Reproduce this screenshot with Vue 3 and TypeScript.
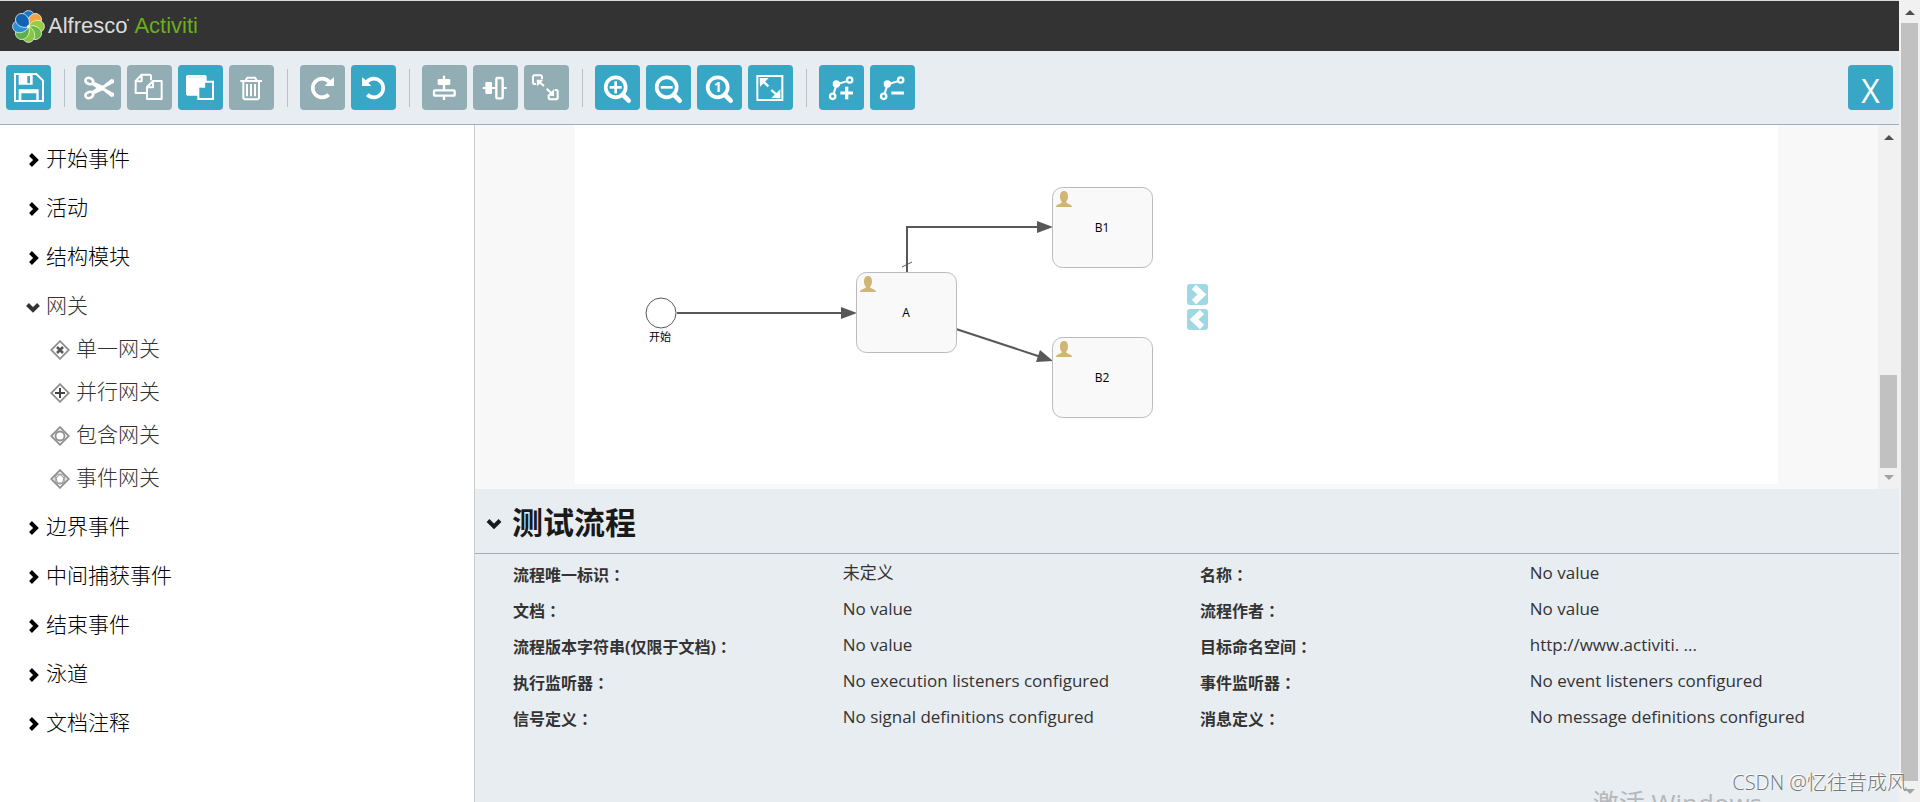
<script setup lang="ts">
import { ref } from 'vue'

type IconName =
  | 'save' | 'cut' | 'copy' | 'paste' | 'delete' | 'redo' | 'undo'
  | 'alignV' | 'alignH' | 'sameSize' | 'zoomIn' | 'zoomOut' | 'zoomActual'
  | 'zoomFit' | 'bendAdd' | 'bendRemove'

interface Tool { icon: IconName; label: string; off?: boolean }
interface Group { title: string; items: { icon: string; label: string }[] }

const toolGroups: Tool[][] = [
  [{ icon: 'save', label: '保存' }],
  [
    { icon: 'cut', label: '剪切', off: true },
    { icon: 'copy', label: '复制', off: true },
    { icon: 'paste', label: '粘贴' },
    { icon: 'delete', label: '删除', off: true },
  ],
  [
    { icon: 'redo', label: '重做', off: true },
    { icon: 'undo', label: '撤销' },
  ],
  [
    { icon: 'alignV', label: '垂直对齐', off: true },
    { icon: 'alignH', label: '水平对齐', off: true },
    { icon: 'sameSize', label: '相同大小', off: true },
  ],
  [
    { icon: 'zoomIn', label: '放大' },
    { icon: 'zoomOut', label: '缩小' },
    { icon: 'zoomActual', label: '实际大小' },
    { icon: 'zoomFit', label: '适应窗口' },
  ],
  [
    { icon: 'bendAdd', label: '添加拐点' },
    { icon: 'bendRemove', label: '删除拐点' },
  ],
]

const groups: Group[] = [
  { title: '开始事件', items: [] },
  { title: '活动', items: [] },
  { title: '结构模块', items: [] },
  {
    title: '网关',
    items: [
      { icon: 'exclusive', label: '单一网关' },
      { icon: 'parallel', label: '并行网关' },
      { icon: 'inclusive', label: '包含网关' },
      { icon: 'event', label: '事件网关' },
    ],
  },
  { title: '边界事件', items: [] },
  { title: '中间捕获事件', items: [] },
  { title: '结束事件', items: [] },
  { title: '泳道', items: [] },
  { title: '文档注释', items: [] },
]

const openGroup = ref('网关')
const toggle = (title: string) => {
  openGroup.value = openGroup.value === title ? '' : title
}

const tasks = [
  { name: 'A', x: 281, y: 147 },
  { name: 'B1', x: 477, y: 62 },
  { name: 'B2', x: 477, y: 212 },
]

const properties = [
  { name: '流程唯一标识', value: '未定义' },
  { name: '名称', value: 'No value' },
  { name: '文档', value: 'No value' },
  { name: '流程作者', value: 'No value' },
  { name: '流程版本字符串(仅限于文档)', value: 'No value' },
  { name: '目标命名空间', value: 'http://www.activiti. ...' },
  { name: '执行监听器', value: 'No execution listeners configured' },
  { name: '事件监听器', value: 'No event listeners configured' },
  { name: '信号定义', value: 'No signal definitions configured' },
  { name: '消息定义', value: 'No message definitions configured' },
]

const petalColors = ['#1a78c8', '#f9a13a', '#9ccb3c', '#6dbb45', '#8cc63f', '#5cb048', '#2f8fd6', '#0f63b0']
const petals = petalColors.map((color, i) => ({ color, angle: i * 45 }))
</script>

<template>
  <div class="page">
    <div class="app">
      <header class="brand">
        <svg class="flower" viewBox="-16 -16 32 32" aria-hidden="true">
          <g v-for="p in petals" :key="p.angle" :transform="`rotate(${p.angle})`">
            <path d="M0 0C-8 -3 -8 -15 0 -15.400C8 -15 8 -3 0 0Z" :fill="p.color" stroke="#e3eff2" stroke-width="0.800" />
          </g>
          <circle r="1.500" fill="#fff3a0" />
        </svg>
        <span class="brand-text">Alfresco<i class="dot" /> <b>Activiti</b></span>
      </header>

      <nav class="toolbar">
        <div v-for="(tools, gi) in toolGroups" :key="gi" class="tool-group">
          <button v-for="t in tools" :key="t.icon" type="button" class="tool" :class="{ off: t.off }" :aria-label="t.label">
            <svg viewBox="0 0 135 135" fill="none" stroke="#fff" aria-hidden="true">
              <g v-if="t.icon === 'save'" stroke-width="6">
                <path d="M27 27H91L111 47V108H27Z" />
                <path d="M38 27H80V59H38Z M64 33V55H72V33Z" fill="#fff" fill-rule="evenodd" stroke="none" />
                <path d="M38 73H98V108H91V85H46V108H38Z" fill="#fff" stroke="none" />
              </g>
              <g v-else-if="t.icon === 'cut'">
                <ellipse cx="40" cy="48" rx="12" ry="9" stroke-width="8" transform="rotate(20 40 48)" />
                <ellipse cx="40" cy="90" rx="12" ry="9" stroke-width="8" transform="rotate(-20 40 90)" />
                <path d="M48 59L56 51L80 62L106 42L114 44V53L50 88L46 80L62 69Z" fill="#fff" stroke="none" />
                <path d="M48 79L56 87L80 76L106 96L114 94V85L50 50L46 58L62 69Z" fill="#fff" stroke="none" />
              </g>
              <g v-else-if="t.icon === 'copy'" stroke-width="6" stroke-linejoin="round">
                <path d="M72 46V32L69 29H44L26 48V84H58M44 29V49H26" />
                <path d="M60 66L78 48H104V102H60ZM78 48V67H60" />
              </g>
              <g v-else-if="t.icon === 'paste'">
                <path d="M28 30H82L86 34V92H28L24 88V34Z" fill="#fff" stroke="none" />
                <path d="M29 36H80" stroke="#b9e2ec" stroke-width="2" />
                <path d="M61 66L79 50H105V102H61Z" fill="#38a7c6" stroke-width="6" />
                <path d="M61 66L80 49V67Z" fill="#fff" stroke-width="3" />
              </g>
              <g v-else-if="t.icon === 'delete'" stroke-width="6">
                <path d="M34 48H99M50 46L55 38H78L83 46M43 50V99L47 103H86L90 99V50" />
                <path d="M54 57V94M66 57V94M78 57V94" stroke-width="6" />
              </g>
              <g v-else-if="t.icon === 'redo' || t.icon === 'undo'" :transform="t.icon === 'undo' ? 'translate(135 0) scale(-1 1)' : undefined">
                <path d="M86 89A28 28 0 1 1 87 50" stroke-width="11" />
                <path d="M102 37V63H74L82 55L94 43Z" fill="#fff" stroke="none" />
              </g>
              <g v-else-if="t.icon === 'alignV'">
                <path d="M66 32V105" stroke-width="7" />
                <rect x="47" y="42" width="38" height="18" rx="4" fill="#fff" stroke="none" />
                <rect x="36" y="76" width="62" height="16" rx="3" fill="#93adb4" stroke-width="7" />
              </g>
              <g v-else-if="t.icon === 'alignH'">
                <path d="M29 69H101" stroke-width="6" />
                <rect x="37" y="51" width="20" height="36" rx="4" fill="#fff" stroke="none" />
                <rect x="70" y="39" width="19" height="61" rx="3" fill="#93adb4" stroke-width="7" />
              </g>
              <g v-else-if="t.icon === 'sameSize'" stroke-width="6">
                <path d="M37 57H30L27 54V34L30 31H51L54 34V42M92 75H98L101 78V100L98 103H77L74 100V92" />
                <path d="M46 51L60 63M68 71L84 86" stroke-width="6" />
                <path d="M38 44H58L40 64ZM90 93V73L69 92Z" fill="#fff" stroke="none" />
              </g>
              <g v-else-if="t.icon === 'zoomIn' || t.icon === 'zoomOut' || t.icon === 'zoomActual'">
                <circle cx="62" cy="67" r="30" stroke-width="11" />
                <path d="M83 89L101 107" stroke-width="14" stroke-linecap="round" />
                <path v-if="t.icon !== 'zoomActual'" d="M44 67H80" stroke-width="8" />
                <path v-if="t.icon === 'zoomIn'" d="M62 49V85" stroke-width="8" />
                <text v-if="t.icon === 'zoomActual'" x="62" y="82" class="one">1</text>
              </g>
              <g v-else-if="t.icon === 'zoomFit'">
                <rect x="28" y="33" width="75" height="72" stroke-width="6" />
                <path d="M43 47L61 64M70 75L89 92" stroke-width="7" />
                <path d="M35 39H62L36 66ZM97 100V73L70 99Z" fill="#fff" stroke="none" />
              </g>
              <g v-else>
                <path d="M41 94L53 58L92 46" stroke-width="6" />
                <circle cx="52" cy="57" r="11" fill="#fff" stroke="none" />
                <circle cx="92" cy="45" r="8" fill="#38a7c6" stroke-width="7" />
                <circle cx="41" cy="94" r="8" fill="#38a7c6" stroke-width="7" />
                <path d="M64 84H102" stroke-width="9" />
                <path v-if="t.icon === 'bendAdd'" d="M83 65V103" stroke-width="10" />
              </g>
            </svg>
          </button>
        </div>
        <button type="button" class="tool close" aria-label="关闭">X</button>
      </nav>

      <main class="body">
        <aside class="palette">
          <ul class="groups">
            <li v-for="g in groups" :key="g.title">
              <button type="button" class="group-title" :class="{ open: openGroup === g.title }" :aria-expanded="openGroup === g.title" @click="toggle(g.title)">
                <svg class="chevron" viewBox="0 0 14 14" aria-hidden="true"><path d="M4.500 1.500L10 7L4.500 12.500" /></svg>
                <span>{{ g.title }}</span>
              </button>
              <ul v-if="openGroup === g.title && g.items.length" class="items">
                <li v-for="it in g.items" :key="it.label" class="item">
                  <svg viewBox="0 0 20 20" fill="none" stroke="#8f8f8f" stroke-width="1.800" aria-hidden="true">
                    <path d="M10 1.200L18.800 10L10 18.800L1.200 10Z" />
                    <path v-if="it.icon === 'exclusive'" d="M7 7L13 13M13 7L7 13" stroke="#555" stroke-width="2.500" />
                    <path v-else-if="it.icon === 'parallel'" d="M10 5V15M5 10H15" stroke="#444" stroke-width="2" />
                    <circle v-else-if="it.icon === 'inclusive'" cx="10" cy="10" r="4.500" />
                    <g v-else>
                      <circle cx="10" cy="10" r="5" stroke-width="1" />
                      <path d="M10 5.500L14 9L12.500 14H7.500L6 9Z" stroke-width="1" />
                    </g>
                  </svg>
                  <span>{{ it.label }}</span>
                </li>
              </ul>
            </li>
          </ul>
        </aside>

        <section class="editor">
          <div class="stage">
            <div class="canvas">
              <svg class="diagram" aria-label="流程图">
                <g fill="none" stroke="#585858" stroke-width="2">
                  <path d="M102 188H268" />
                  <path d="M332 147V102H464" />
                  <path d="M381 204L466 232" />
                  <path d="M327 142L337 137" stroke-width="1" />
                </g>
                <g fill="#585858">
                  <path d="M266 182L282 188L266 194Z" />
                  <path d="M462 96L478 102L462 108Z" />
                  <path d="M465 225L478 236L461 237Z" />
                </g>
                <circle cx="86" cy="188" r="15" fill="#fff" stroke="#585858" />
                <text x="85" y="216" class="event-name">开始</text>
                <g v-for="t in tasks" :key="t.name" :transform="`translate(${t.x} ${t.y})`">
                  <rect x="0.500" y="0.500" width="100" height="80" rx="10" fill="#f9f9f9" stroke="#bbb" />
                  <path d="M4 20C4 17 9 17 10 15C7 12 7 4 12 4C17 4 17 12 14 15C15 17 20 17 20 20Z" fill="#d1b575" />
                  <text x="50" y="45" class="task-name">{{ t.name }}</text>
                </g>
              </svg>
              <div class="side-switch">
                <button type="button" aria-label="展开"><svg viewBox="0 0 21 21"><path d="M7 3L15 10.500L7 18" /></svg></button>
                <button type="button" aria-label="收起"><svg viewBox="0 0 21 21"><path d="M15 3L7 10.500L15 18" /></svg></button>
              </div>
            </div>
            <div class="track inner-track">
              <i class="arrow up" /><i class="thumb inner-thumb" /><i class="arrow down" />
            </div>
          </div>

          <section class="props">
            <h1>
              <svg class="title-chevron" viewBox="0 0 16 12" aria-hidden="true"><path d="M2 2.500L8 8.500L14 2.500" /></svg>
              测试流程
            </h1>
            <dl>
              <div v-for="p in properties" :key="p.name" class="prop">
                <dt>{{ p.name }}<span class="colon">：</span></dt>
                <dd>{{ p.value }}</dd>
              </div>
            </dl>
          </section>
        </section>
      </main>
    </div>
    <div class="track">
      <i class="arrow up" /><i class="thumb page-thumb" /><i class="arrow down" />
    </div>
    <p class="mark activate">激活 Windows</p>
    <p class="mark author">CSDN @忆往昔成风</p>
  </div>
</template>

<style>
body {
  margin: 0;
}
</style>

<style scoped>
* {
  box-sizing: border-box;
}
.page {
  display: flex;
  position: relative;
  height: 100vh;
  overflow: hidden;
  font-family: "Open Sans", "Noto Sans CJK SC", sans-serif;
  color: #333;
  background: #e8edf1;
}
ul, dl, dd, h1, p {
  margin: 0;
  padding: 0;
  list-style: none;
}
button {
  border: 0;
  padding: 0;
  font-family: inherit;
  cursor: pointer;
}
.app {
  flex: 1;
  min-width: 0;
  display: flex;
  flex-direction: column;
}
.brand {
  display: flex;
  align-items: center;
  height: 51px;
  padding-left: 12px;
  gap: 3px;
  background: #333;
  border-top: 1px solid #ddd;
}
.flower {
  width: 33px;
  height: 33px;
}
.brand-text {
  font: 22px/32px "Liberation Sans", sans-serif;
  color: #dcdcdc;
}
.brand-text b {
  font-weight: 400;
  color: #6aae1c;
}
.dot {
  display: inline-block;
  width: 2px;
  height: 2px;
  vertical-align: 12px;
  background: #aaa;
}
.toolbar {
  display: flex;
  align-items: center;
  height: 74px;
  padding: 0 6px;
  border-bottom: 1px solid #a4acbb;
}
.tool-group {
  display: flex;
  align-items: center;
  gap: 6px;
}
.tool-group + .tool-group::before {
  content: "";
  width: 1px;
  height: 38px;
  margin: 0 5px 0 13px;
  background: #b9c1cb;
}
.tool-group + .tool-group + .tool-group::before {
  margin-right: 6px;
}
.tool {
  width: 45px;
  height: 45px;
  border-radius: 4px;
  background: #38a7c6;
  color: #fff;
}
.tool.off {
  background: #93adb4;
}
.tool svg {
  display: block;
  width: 45px;
  height: 45px;
}
.one {
  font: 700 42px "Open Sans", sans-serif;
  text-anchor: middle;
  fill: #fff;
  stroke: none;
}
.close {
  margin-left: auto;
  padding-top: 6px;
  font-size: 32px;
  line-height: 38px;
}
.body {
  flex: 1;
  display: flex;
  min-height: 0;
}
.palette {
  flex: none;
  width: 475px;
  padding: 13px 26px 0;
  background: #fff;
  border-right: 1px solid #c8ccd0;
}
.groups {
  display: flex;
  flex-direction: column;
  gap: 6px;
}
.group-title {
  display: flex;
  align-items: center;
  gap: 6px;
  width: 100%;
  height: 43px;
  background: none;
  font-size: 21px;
  font-weight: 300;
  color: #000;
}
.group-title.open {
  color: #333;
}
.group-title span,
.item span {
  padding-bottom: 5px;
}
.chevron {
  width: 14px;
  height: 14px;
}
.open .chevron {
  transform: rotate(90deg);
}
.chevron path,
.title-chevron path {
  fill: none;
  stroke: currentColor;
  stroke-width: 4;
}
.item {
  display: flex;
  align-items: center;
  gap: 6px;
  height: 43px;
  padding-left: 24px;
  font-size: 21px;
  font-weight: 300;
}
.item svg {
  width: 20px;
  height: 20px;
}
.editor {
  flex: 1;
  min-width: 0;
  display: flex;
  flex-direction: column;
}
.stage {
  display: flex;
  height: 364px;
  background: #f8f8f8;
}
.canvas {
  position: relative;
  flex: 1;
  margin: 0 100px 5px;
  background: #fff;
}
.diagram {
  display: block;
  width: 100%;
  height: 100%;
}
.task-name,
.event-name {
  font-size: 12px;
  text-anchor: middle;
  fill: #000;
}
.event-name {
  font-size: 11px;
}
.side-switch {
  position: absolute;
  left: 612px;
  top: 159px;
  display: flex;
  flex-direction: column;
  gap: 4px;
}
.side-switch button {
  width: 21px;
  height: 21px;
  border-radius: 3px;
  background: #a0d7e4;
}
.side-switch svg {
  display: block;
  fill: none;
  stroke: #fff;
  stroke-width: 6;
}
.track {
  flex: none;
  display: flex;
  flex-direction: column;
  align-items: center;
  width: 21px;
  padding: 10px 0 8px;
  background: #f1f1f1;
}
.arrow {
  border: 5px solid transparent;
  border-top-width: 0;
}
.arrow.up {
  border-bottom-color: #505050;
}
.arrow.down {
  border-top: 5px solid #a3a3a3;
  border-bottom-width: 0;
}
.thumb {
  width: 17px;
  background: #c1c1c1;
}
.page-thumb {
  flex: 1;
  margin: 8px 0;
}
.inner-track {
  padding-bottom: 9px;
}
.inner-thumb {
  height: 93px;
  margin: auto 0 7px;
}
h1 {
  display: flex;
  align-items: center;
  gap: 10px;
  height: 65px;
  padding: 2px 0 0 11px;
  border-bottom: 1px solid #a4acbb;
  font-size: 31px;
  line-height: 40px;
  color: #1a1a1a;
}
.title-chevron {
  width: 16px;
  height: 12px;
  margin-top: 4px;
}
dl {
  display: grid;
  grid-template-columns: 1fr 1fr;
  grid-auto-rows: 36px;
  padding: 2px 12px 0 38px;
  font-size: 16px;
  line-height: 36px;
}
.prop {
  display: grid;
  grid-template-columns: 48% 52%;
}
dt {
  font-weight: 700;
}
dd {
  font-size: 17px;
  line-height: 34px;
}
.colon {
  font-family: "Noto Sans CJK TC", sans-serif;
}
.mark {
  position: absolute;
  white-space: nowrap;
}
.activate {
  right: 158px;
  bottom: -18px;
  font-size: 26px;
  line-height: 34px;
  color: #b4b8bc;
}
.author {
  right: 13px;
  bottom: 6px;
  font-size: 20px;
  line-height: 26px;
  font-weight: 300;
  color: #777;
  text-shadow: -1px -1px 0 #fff;
}
</style>
